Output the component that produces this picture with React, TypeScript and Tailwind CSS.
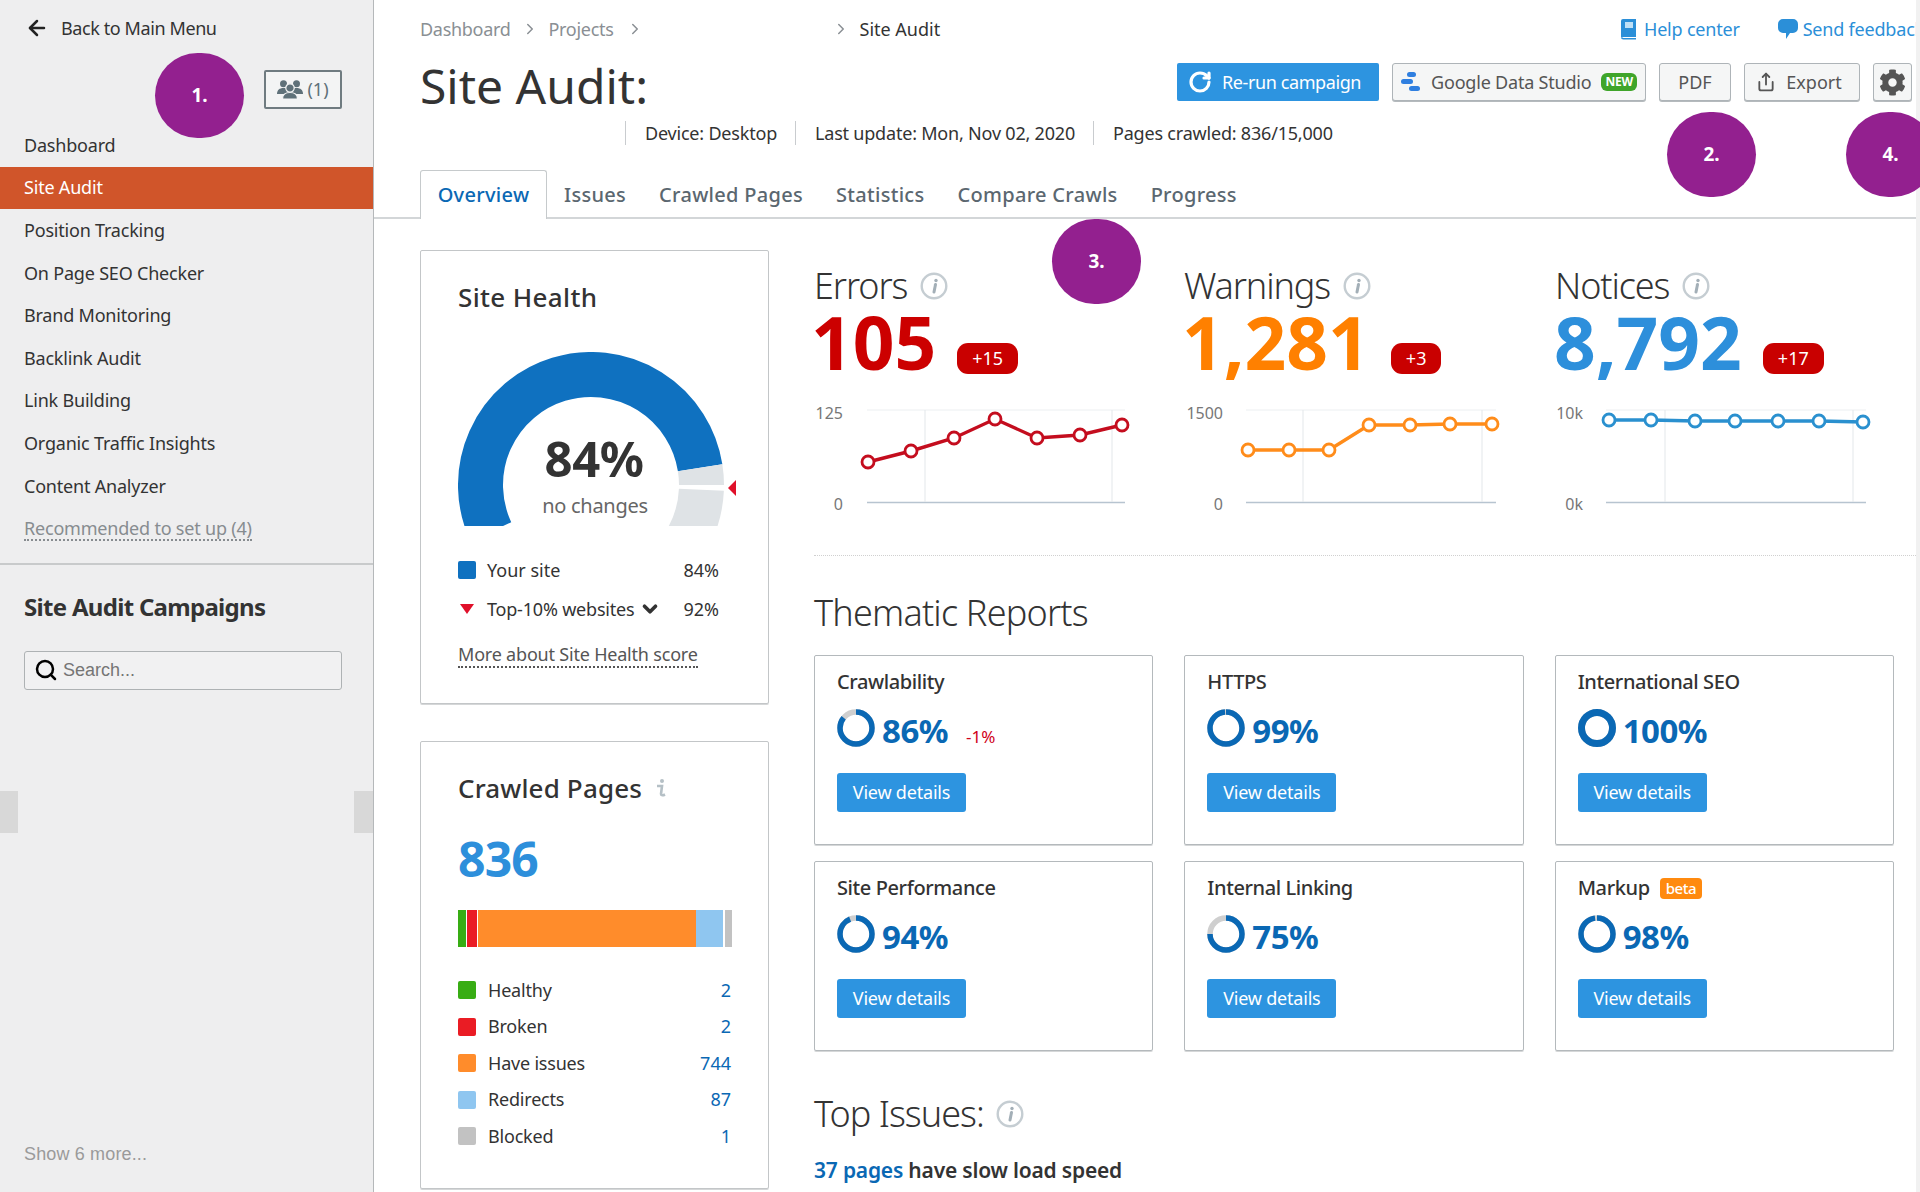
import { ArrowLeft, ChevronDown, ChevronRight, RotateCw, Search, Share } from "lucide-react";
import { FaCog } from "react-icons/fa";

const navItems = [
  "Dashboard",
  "Site Audit",
  "Position Tracking",
  "On Page SEO Checker",
  "Brand Monitoring",
  "Backlink Audit",
  "Link Building",
  "Organic Traffic Insights",
  "Content Analyzer",
];

const tabs = ["Issues", "Crawled Pages", "Statistics", "Compare Crawls", "Progress"];

const stats = [
  {
    title: "Errors",
    value: "105",
    delta: "+15",
    valueClass: "text-[#cc0000]",
    color: "#c40d1e",
    top: "125",
    bottom: "0",
    topX: 29,
    bottomX: 29,
    lineFrom: 53,
    lineTo: 311,
    grid: [111, 298],
    points: [[54, 62], [97, 51], [140, 38], [181, 19], [223, 38], [266, 35], [308, 25]],
  },
  {
    title: "Warnings",
    value: "1,281",
    delta: "+3",
    valueClass: "text-[#ff8000]",
    color: "#ff8c1a",
    top: "1500",
    bottom: "0",
    topX: 38,
    bottomX: 38,
    lineFrom: 61,
    lineTo: 311,
    grid: [118, 297],
    points: [[63, 50], [104, 50], [144, 50], [184, 25], [225, 25], [265, 24], [307, 24]],
  },
  {
    title: "Notices",
    value: "8,792",
    delta: "+17",
    valueClass: "text-[#2d8fdb]",
    color: "#2a90cf",
    top: "10k",
    bottom: "0k",
    topX: 26,
    bottomX: 26,
    lineFrom: 49,
    lineTo: 309,
    grid: [108, 296],
    points: [[52, 20], [94, 20], [138, 21], [178, 21], [221, 21], [262, 21], [306, 22]],
  },
];

const reports = [
  { title: "Crawlability", pct: 86, delta: "-1%" },
  { title: "HTTPS", pct: 99 },
  { title: "International SEO", pct: 100 },
  { title: "Site Performance", pct: 94 },
  { title: "Internal Linking", pct: 75 },
  { title: "Markup", pct: 98, beta: true },
];

const crawled = [
  { label: "Healthy", value: "2", color: "bg-[#38ad14]" },
  { label: "Broken", value: "2", color: "bg-[#ea1c24]" },
  { label: "Have issues", value: "744", color: "bg-[#ff8c2b]" },
  { label: "Redirects", value: "87", color: "bg-[#8fc6f0]" },
  { label: "Blocked", value: "1", color: "bg-[#c2c2c2]" },
];

function arc(from: number, to: number) {
  const r = 110.5;
  const pt = (deg: number) => {
    const rad = (deg * Math.PI) / 180;
    return `${133 + r * Math.cos(rad)} ${133 - r * Math.sin(rad)}`;
  };
  return `M ${pt(from)} A ${r} ${r} 0 ${from - to > 180 ? 1 : 0} 1 ${pt(to)}`;
}

function InfoIcon({ className = "" }: { className?: string }) {
  return (
    <svg width="28" height="28" viewBox="0 0 28 28" className={className}>
      <circle cx="14" cy="14" r="12.3" fill="none" stroke="#c5cdd2" strokeWidth="2.4" />
      <path d="M15.5 12.5 14 20" stroke="#a3afb7" strokeWidth="3" strokeLinecap="round" />
      <circle cx="16" cy="8.500" r="1.7" fill="#a3afb7" />
    </svg>
  );
}

function PeopleIcon() {
  return (
    <svg width="26" height="19" viewBox="0 0 26 19">
      <g fill="#5f7179">
        <circle cx="6.500" cy="3.800" r="3.500" />
        <circle cx="19.500" cy="3.800" r="3.500" />
        <path d="M0 14c0-4 2.500-6 6.500-6s6.500 2 6.500 6Z" />
        <path d="M13 14c0-4 2.500-6 6.500-6s6.500 2 6.500 6Z" />
        <circle cx="13" cy="8" r="4.200" stroke="#f3f4f4" strokeWidth="1.200" />
        <path d="M5.500 19c0-4.500 3-6.500 7.500-6.500s7.500 2 7.500 6.500Z" stroke="#f3f4f4" strokeWidth="1.200" />
      </g>
    </svg>
  );
}

function Donut({ pct }: { pct: number }) {
  const full = pct === 100;
  return (
    <svg width="38" height="38" viewBox="0 0 38 38" className="shrink-0 -rotate-90">
      <circle cx="19" cy="19" r={full ? 15.5 : 16} fill="none" stroke="#cfcfcf" strokeWidth={full ? 7 : 5.5} />
      <circle
        cx="19"
        cy="19"
        r={full ? 15.5 : 16}
        fill="none"
        stroke="#0a68b4"
        strokeWidth={full ? 7 : 5.5}
        pathLength={100}
        strokeDasharray={`${pct} 100`}
      />
    </svg>
  );
}

function Spark({ stat }: { stat: (typeof stats)[number] }) {
  return (
    <svg width="340" height="115" viewBox="0 0 340 115" className="mt-[22px] block">
      <line x1={stat.lineFrom} x2={stat.lineTo} y1="10" y2="10" stroke="#eceff1" />
      <line x1={stat.lineFrom} x2={stat.lineTo} y1="102.5" y2="102.5" stroke="#b7c4d0" strokeWidth="1.5" />
      {stat.grid.map((x) => (
        <line key={x} x1={x} x2={x} y1="10" y2="102" stroke="#e3e7ea" />
      ))}
      <text x={stat.topX} y="19" textAnchor="end" fontSize="16" fill="#777">
        {stat.top}
      </text>
      <text x={stat.bottomX} y="110" textAnchor="end" fontSize="16" fill="#777">
        {stat.bottom}
      </text>
      <polyline points={stat.points.map((p) => p.join(",")).join(" ")} fill="none" stroke={stat.color} strokeWidth="3.4" />
      {stat.points.map(([x, y]) => (
        <circle key={x} cx={x} cy={y} r="6" fill="#fff" stroke={stat.color} strokeWidth="2.8" />
      ))}
    </svg>
  );
}

function Marker({ label, className }: { label: string; className: string }) {
  return (
    <div
      className={`absolute flex h-[85px] w-[89px] items-center justify-center rounded-full bg-[#93208f] text-[19px] leading-none font-bold text-white ${className}`}
    >
      {label}
    </div>
  );
}

function GreyButton({ className, children }: { className: string; children: React.ReactNode }) {
  return (
    <button className={`flex h-[38px] items-center justify-center rounded-[3px] border border-[#aeb4b8] bg-[#f5f6f6] text-[18px] text-[#555] shadow-[0_1px_0_#b5babd] ${className}`}>
      {children}
    </button>
  );
}

export default function App() {
  return (
    <div className="relative flex h-[1192px] w-[1920px] overflow-hidden bg-white font-['Noto_Sans',sans-serif] text-[18px] text-[#333]">
      <aside className="flex h-full w-[374px] shrink-0 flex-col border-r border-[#b5b8ba] bg-[#eeeeef]">
        <div className="flex h-[56px] items-center gap-[12px] pl-[25px]">
          <ArrowLeft size={24} strokeWidth={2.5} className="text-[#222]" />
          <span className="tracking-[-0.4px]">Back to Main Menu</span>
        </div>
        <div className="mt-[14px] flex justify-end pr-[31px]">
          <button className="flex h-[39px] w-[78px] items-center justify-center gap-[4px] rounded-[2px] border-2 border-[#6f7b80] bg-[#f3f4f4] text-[#5f7179]">
            <PeopleIcon />
            (1)
          </button>
        </div>
        <nav className="mt-[15px]">
          {navItems.map((item) => (
            <div
              key={item}
              className={`flex h-[42.6px] items-center pl-[24px] tracking-[-0.2px] ${item === "Site Audit" ? "bg-[#d0552a] text-white" : ""}`}
            >
              {item}
            </div>
          ))}
          <div className="flex h-[42.6px] items-center pl-[24px] tracking-[-0.2px] text-[#878c90]">
            <span className="border-b-2 border-dotted border-[#878c90] leading-[22px]">Recommended to set up (4)</span>
          </div>
        </nav>
        <div className="mt-[13px] h-[2px] bg-[#c8cacb]" />
        <h2 className="mt-[26px] pl-[24px] text-[24px] leading-[32px] font-bold tracking-[-0.7px] text-[#333]">Site Audit Campaigns</h2>
        <div className="ml-[24px] mr-[31px] mt-[28px] flex h-[39px] items-center gap-[5px] rounded-[3px] border border-[#aeb2b4] bg-[#f1f1f2] pl-[9px]">
          <Search size={24} strokeWidth={2.5} className="text-black" />
          <span className="font-['Liberation_Sans',sans-serif] text-[#757575]">Search...</span>
        </div>
        <div className="mt-[101px] flex h-[42px] justify-between">
          <div className="w-[18px] bg-[#d8d8d8]" />
          <div className="w-[19px] bg-[#d8d8d8]" />
        </div>
        <div className="mt-auto pb-[24px] pl-[24px] font-['Liberation_Sans',sans-serif] tracking-[0.15px] text-[#9a9a9a]">Show 6 more...</div>
      </aside>

      <main className="flex min-w-0 flex-1 flex-col border-r-4 border-[#f1f1f1]">
        <header className="h-[219px] border-b-2 border-[#d3d6d8]">
          <div className="flex h-[58px] items-center justify-between pl-[46px]">
            <div className="flex items-center tracking-[-0.3px] text-[#8a8f94]">
              <span>Dashboard</span>
              <ChevronRight size={18} className="mx-[10px]" />
              <span>Projects</span>
              <ChevronRight size={18} className="ml-[12px] mr-[188px]" />
              <ChevronRight size={18} className="mr-[10px]" />
              <span className="tracking-normal text-[#333]">Site Audit</span>
            </div>
            <div className="flex w-[296px] items-center overflow-hidden whitespace-nowrap tracking-[-0.2px] text-[#2b8fd8]">
              <svg width="17" height="22" viewBox="0 0 17 22" className="mr-[7px] shrink-0">
                <path d="M3 1h13v18H3a2.500 2.500 0 0 0-2 1V3a2 2 0 0 1 2-2Z M1 19a2.500 2.500 0 0 0 2.500 2.500H16V20H3.500" fill="#2b8fd8" />
                <rect x="5" y="4" width="8" height="6" fill="#bfe0f6" />
              </svg>
              <span>Help center</span>
              <svg width="20" height="24" viewBox="0 0 20 24" className="ml-[38px] mr-[5px] shrink-0">
                <path d="M5 2h10a5 5 0 0 1 5 5v4a5 5 0 0 1-5 5h-3l-4 6v-6H5a5 5 0 0 1-5-5V7a5 5 0 0 1 5-5Z" fill="#2b8fd8" />
              </svg>
              <span>Send feedback</span>
            </div>
          </div>
          <div className="flex h-[52px] items-start justify-between pl-[46px] pr-[4px]">
            <h1 className="text-[48px] leading-[56px] font-normal text-[#333]">Site Audit:</h1>
            <div className="mt-[5px] flex items-center gap-[13px]">
              <button className="flex h-[38px] w-[202px] items-center gap-[10px] rounded-[2px] bg-[#2d94e0] pl-[11px] text-[18px] tracking-[-0.4px] text-white">
                <RotateCw size={24} strokeWidth={3.2} />
                Re-run campaign
              </button>
              <GreyButton className="w-[254px] gap-[10px] tracking-[-0.2px]">
                <svg width="20" height="22" viewBox="0 0 20 22">
                  <rect x="6" y="1" width="9" height="5" rx="2.500" fill="#2f7fe0" />
                  <rect x="0" y="8" width="12" height="5" rx="2.500" fill="#2f7fe0" />
                  <rect x="8" y="15" width="11" height="5" rx="2.500" fill="#2f7fe0" />
                </svg>
                Google Data Studio
                <span className="rounded-[6px] bg-[#3fa52a] px-[4px] text-[12px] leading-[18px] font-bold text-white">NEW</span>
              </GreyButton>
              <GreyButton className="w-[72px]">PDF</GreyButton>
              <GreyButton className="w-[116px] gap-[10px] pr-[6px]">
                <Share size={20} strokeWidth={2.2} />
                Export
              </GreyButton>
              <GreyButton className="w-[39px]">
                <FaCog size={27} className="text-[#555]" />
              </GreyButton>
            </div>
          </div>
          <div className="flex h-[46px] items-center pl-[251px] tracking-[-0.2px] text-[#333]">
            <div className="flex h-[24px] items-center border-l border-[#c9cccf] pl-[19px] pr-[18px]">Device: Desktop</div>
            <div className="flex h-[24px] items-center border-l border-[#c9cccf] pl-[19px] pr-[18px]">Last update: Mon, Nov 02, 2020</div>
            <div className="flex h-[24px] items-center border-l border-[#c9cccf] pl-[19px]">Pages crawled: 836/15,000</div>
          </div>
          <div className="mt-[14px] flex h-[49px] items-end pl-[46px] text-[20px] font-medium tracking-[0.3px] text-[#5b6770]">
            <div className="flex h-[49px] w-[127px] items-center justify-center rounded-t-[3px] border border-b-0 border-[#c6cacc] bg-white text-[#0a68b4]">
              Overview
            </div>
            <div className="flex h-[48px] items-center gap-[33px] pl-[17px]">
              {tabs.map((tab) => (
                <span key={tab}>{tab}</span>
              ))}
            </div>
          </div>
        </header>

        <div className="flex flex-1 pl-[46px] pt-[31px]">
          <div className="w-[349px] shrink-0">
            <section className="h-[454px] rounded-[2px] border border-[#c3c6c8] pl-[37px] pt-[30px] shadow-[0_1px_0_#d5d7d8]">
              <h2 className="text-[26px] leading-[32px] font-medium tracking-[0.35px] text-[#333]">Site Health</h2>
              <div className="relative mt-[39px] h-[174px] w-[280px]">
                <svg width="280" height="174" viewBox="0 0 280 174" className="block">
                  <path d={arc(205, 9)} fill="none" stroke="#0f71c0" strokeWidth="45" />
                  <path d={arc(9, 0)} fill="none" stroke="#dfe3e6" strokeWidth="45" />
                  <path d={arc(-2.5, -30)} fill="none" stroke="#dfe3e6" strokeWidth="45" />
                  <polygon points="270,136 278,128 278,144" fill="#e0102a" />
                </svg>
                <div className="absolute left-[80px] top-[79px] w-[112px] text-center text-[49px] leading-[54px] font-bold tracking-[-0.5px] text-[#333]">84%</div>
                <div className="absolute left-[76px] top-[140px] w-[122px] text-center text-[20px] leading-[28px] tracking-[-0.3px] text-[#666]">no changes</div>
              </div>
              <div className="mt-[30px] flex h-[28px] w-[261px] items-center justify-between">
                <div className="flex items-center gap-[11px]">
                  <span className="h-[18px] w-[18px] rounded-[2px] bg-[#0f71c0]" />
                  Your site
                </div>
                84%
              </div>
              <div className="mt-[11px] flex h-[28px] w-[261px] items-center justify-between">
                <div className="flex items-center tracking-[-0.2px]">
                  <svg width="18" height="12" viewBox="0 0 18 12" className="mr-[11px]">
                    <polygon points="2,1 16,1 9,11" fill="#e0102a" />
                  </svg>
                  Top-10% websites
                  <ChevronDown size={22} strokeWidth={4} className="ml-[5px]" />
                </div>
                92%
              </div>
              <div className="mt-[18px] h-[28px]">
                <span className="border-b-2 border-dotted border-[#555] leading-[22px] tracking-[-0.2px] text-[#555]">More about Site Health score</span>
              </div>
            </section>

            <section className="mt-[37px] h-[448px] rounded-[2px] border border-[#c3c6c8] pl-[37px] pt-[30px] shadow-[0_1px_0_#d5d7d8]">
              <h2 className="flex items-center gap-[13px] text-[26px] leading-[32px] font-medium tracking-[0.15px] text-[#333]">
                Crawled Pages
                <svg width="12" height="20" viewBox="0 0 12 20">
                  <circle cx="7" cy="3" r="2" fill="#b5c0c6" />
                  <path d="M2 8h5l-1 8c0 1.500 2 1.500 4 .5" fill="none" stroke="#b5c0c6" strokeWidth="2.6" />
                </svg>
              </h2>
              <div className="mt-[29px] text-[48px] leading-[52px] font-bold tracking-[-0.8px] text-[#2d8fdb]">836</div>
              <div className="mt-[25px] flex h-[37px] w-[274px]">
                <div className="w-[8px] bg-[#38ad14]" />
                <div className="ml-[1px] w-[10px] bg-[#ea1c24]" />
                <div className="ml-[1px] w-[218px] bg-[#ff8c2b]" />
                <div className="w-[27px] bg-[#8fc6f0]" />
                <div className="ml-[2px] w-[7px] bg-[#c2c2c2]" />
              </div>
              <div className="mt-[25px] w-[273px]">
                {crawled.map((row) => (
                  <div key={row.label} className="flex h-[36.500px] items-center justify-between">
                    <div className="flex items-center gap-[12px] tracking-[-0.2px]">
                      <span className={`h-[18px] w-[18px] rounded-[2px] ${row.color}`} />
                      {row.label}
                    </div>
                    <span className="text-[#0a68b4]">{row.value}</span>
                  </div>
                ))}
              </div>
            </section>
          </div>

          <div className="ml-[45px] min-w-0 flex-1">
            <div className="grid h-[306px] grid-cols-[371px_372px_1fr] border-b border-dotted border-[#d0d0d0]">
              {stats.map((stat, i) => (
                <div key={stat.title}>
                  <div className={`mt-[18px] flex h-[36px] items-center gap-[13px] text-[36px] leading-[36px] font-light tracking-[-1.100px] text-[#333] ${i === 0 ? "" : i === 1 ? "-ml-[1px]" : "-ml-[2px]"}`}>
                    {stat.title}
                    <InfoIcon />
                  </div>
                  <div className="-ml-[3px] flex h-[74px] items-center">
                    <span className={`text-[73px] leading-none font-bold ${stat.valueClass}`}>{stat.value}</span>
                    <span className="ml-[21px] mt-[34px] flex h-[31px] items-center rounded-[11px] bg-[#c90000] px-[15px] text-[18px] leading-none text-white">
                      {stat.delta}
                    </span>
                  </div>
                  <Spark stat={stat} />
                </div>
              ))}
            </div>

            <h2 className="flex h-[99px] items-center pt-[15px] text-[36px] leading-[36px] font-light tracking-[-0.8px] text-[#333]">Thematic Reports</h2>
            <div className="grid w-[1080px] grid-cols-3 gap-x-[31px] gap-y-[16px]">
              {reports.map((report) => (
                <div key={report.title} className="h-[190px] rounded-[2px] border border-[#b4b9bc] pl-[22px] pt-[12px] shadow-[0_1px_0_#d5d7d8]">
                  <div className="flex h-[28px] items-center gap-[10px] text-[20px] font-medium tracking-[-0.4px] text-[#333]">
                    {report.title}
                    {report.beta && (
                      <span className="rounded-[4px] bg-[#ff8a0f] px-[6px] text-[15px] leading-[21px] font-medium text-white">beta</span>
                    )}
                  </div>
                  <div className="mt-[12px] flex h-[40px] items-center">
                    <Donut pct={report.pct} />
                    <span className="ml-[7px] mt-[4px] text-[33px] leading-none font-bold tracking-[-0.5px] text-[#0a68b4]">{report.pct}%</span>
                    {report.delta && <span className="ml-[18px] mt-[16px] text-[17px] leading-none text-[#d0021b]">{report.delta}</span>}
                  </div>
                  <button className="mt-[25px] flex h-[39px] w-[129px] items-center justify-center rounded-[3px] bg-[#2d94e0] text-[18px] tracking-[-0.2px] text-white">
                    View details
                  </button>
                </div>
              ))}
            </div>
            <div className="mt-[45px] flex h-[36px] items-center gap-[12px] text-[36px] leading-[36px] font-light tracking-[-1px] text-[#333]">
              Top Issues:
              <InfoIcon />
            </div>
            <p className="mt-[23px] text-[21px] leading-[30px] font-semibold tracking-[-0.2px]">
              <span className="text-[#0a68b4]">37 pages</span> have slow load speed
            </p>
          </div>
        </div>
      </main>

      <Marker label="1." className="left-[155px] top-[53px]" />
      <Marker label="2." className="left-[1667px] top-[112px]" />
      <Marker label="3." className="left-[1052px] top-[219px]" />
      <Marker label="4." className="left-[1846px] top-[112px]" />
    </div>
  );
}
